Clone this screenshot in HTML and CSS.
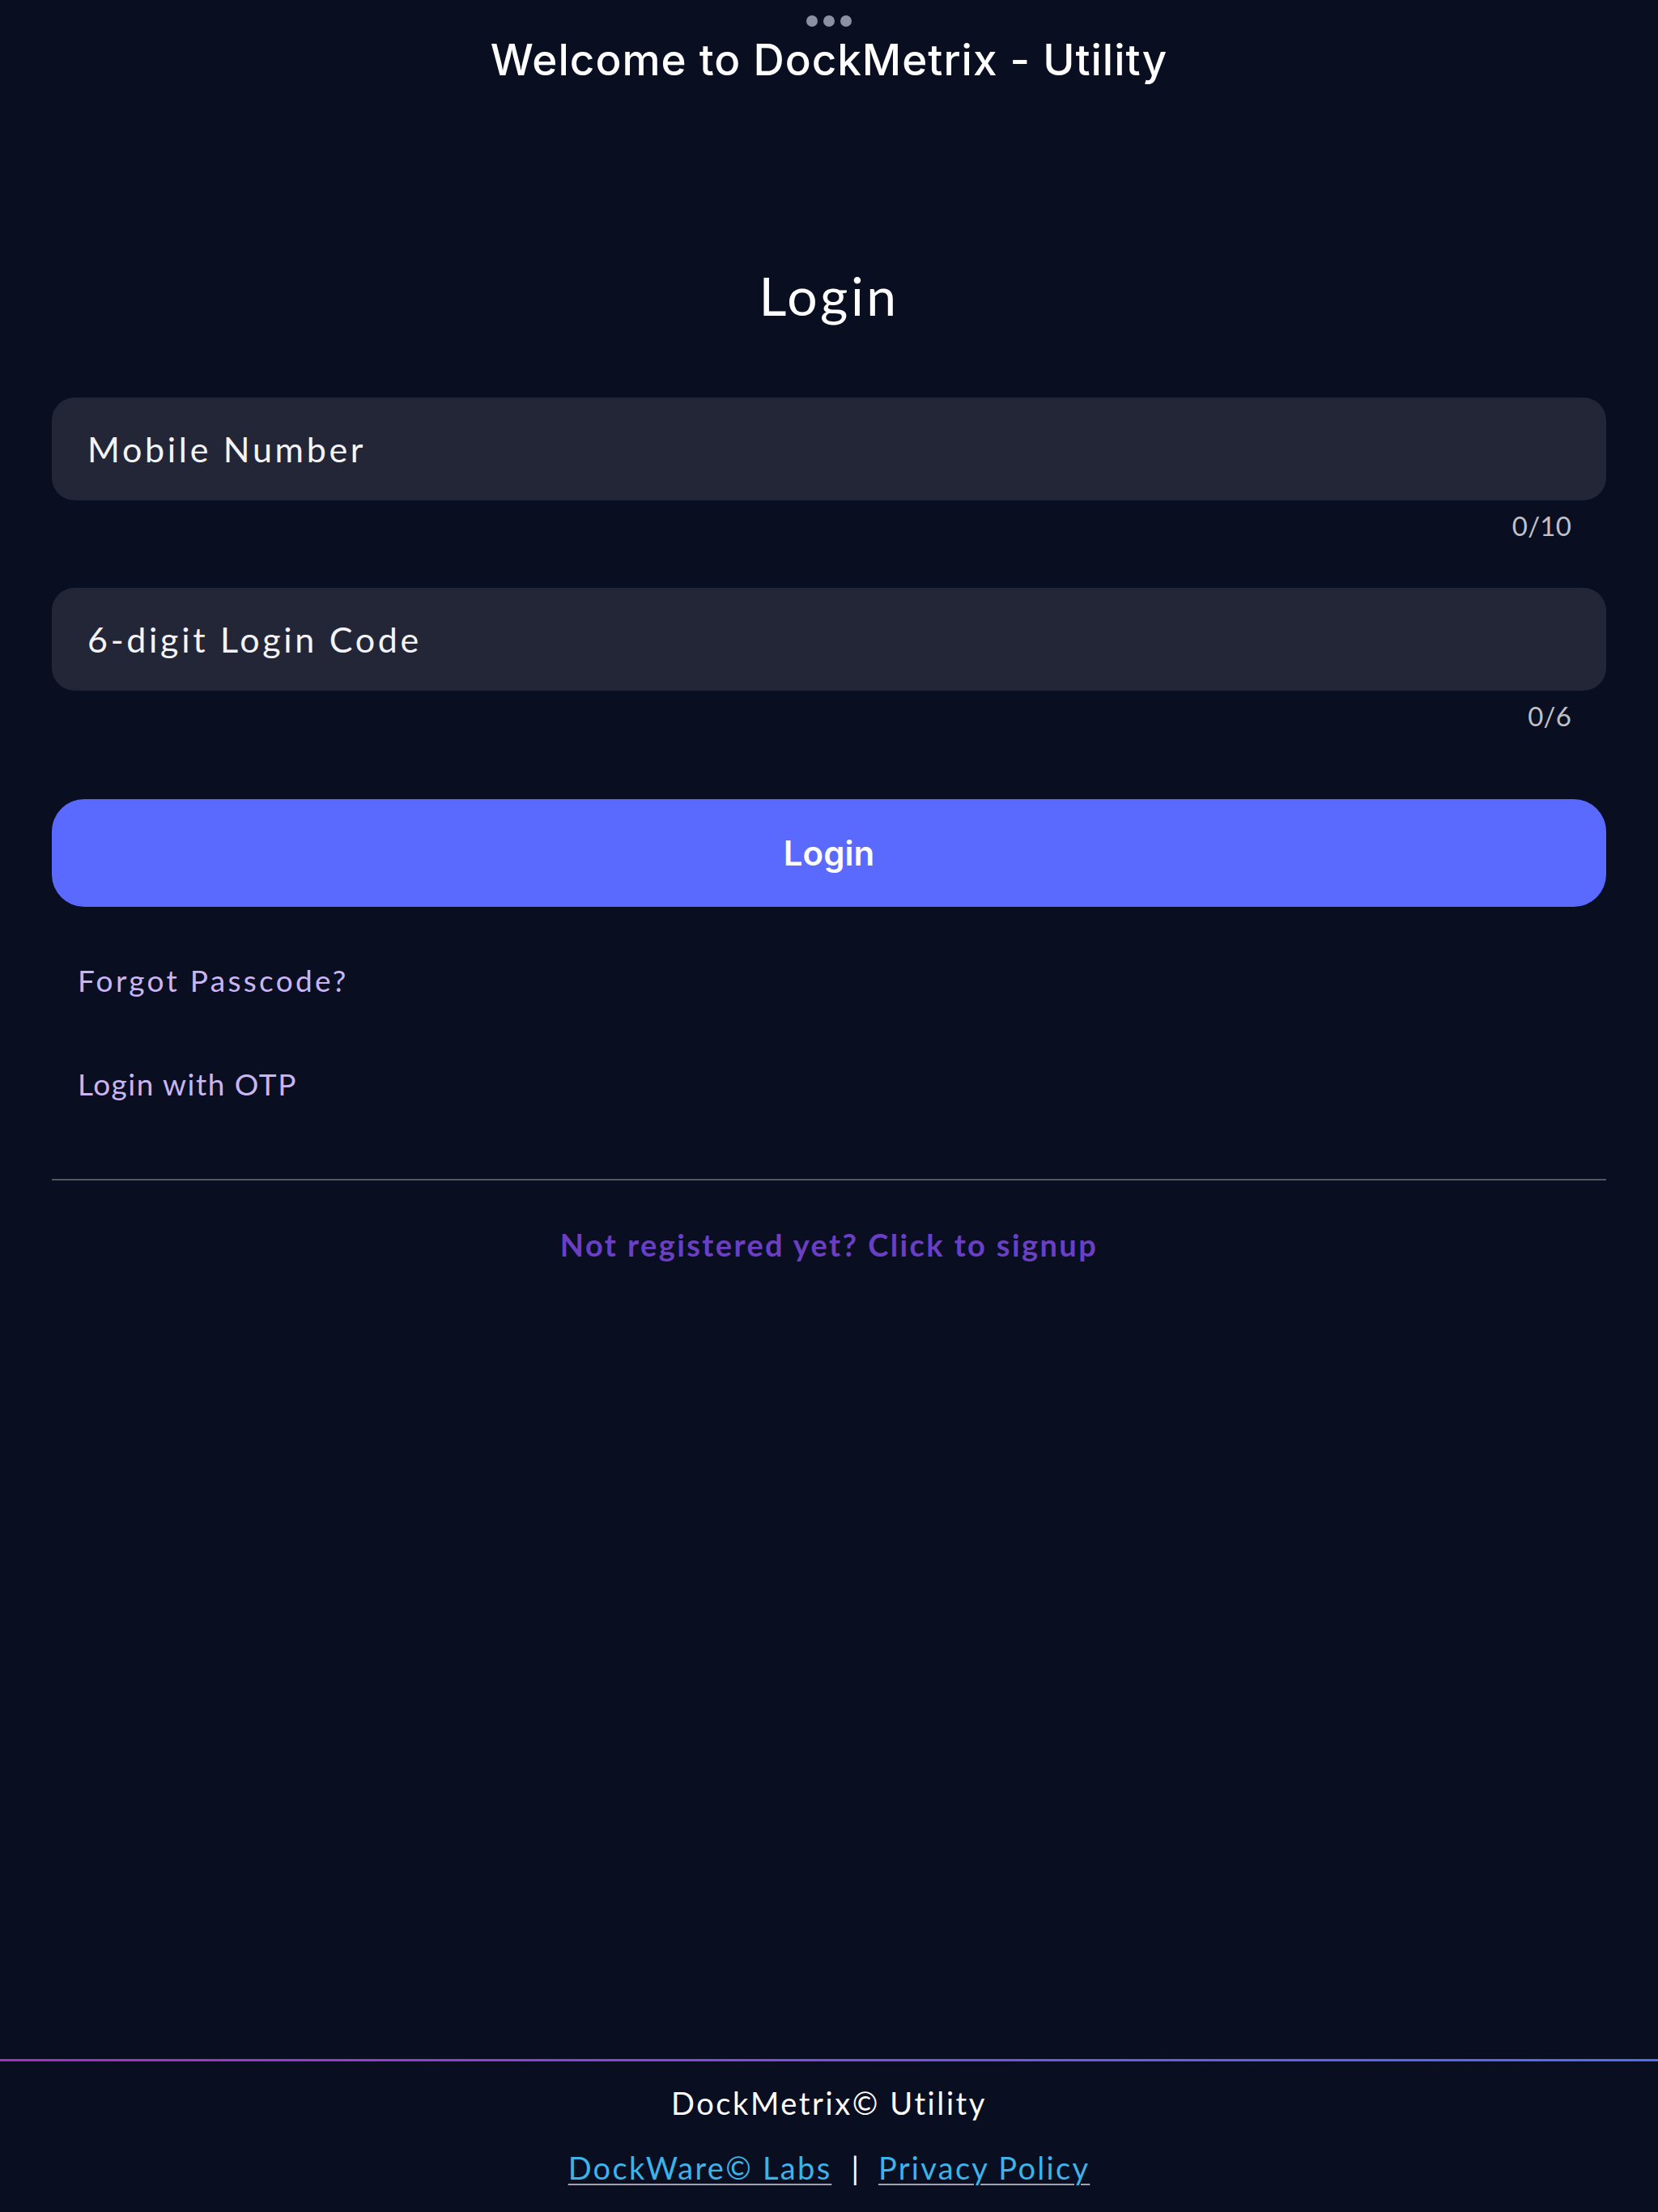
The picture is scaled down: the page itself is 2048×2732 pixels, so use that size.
FILE: index.html
```html
<!DOCTYPE html>
<html lang="en">
<head>
<meta charset="utf-8">
<title>DockMetrix - Utility</title>
<link rel="stylesheet" href="styles.css">
</head>
<body>
<div class="page">
  <header class="topbar">
    <div class="dots"><span class="dot"></span><span class="dot"></span><span class="dot"></span></div>
    <h1 class="app-title">Welcome to DockMetrix - Utility</h1>
  </header>
  <main class="main">
    <h2 class="heading">Login</h2>
    <div class="field">
      <div class="input">Mobile Number</div>
      <div class="counter">0/10</div>
    </div>
    <div class="field field-second">
      <div class="input">6-digit Login Code</div>
      <div class="counter">0/6</div>
    </div>
    <button class="btn-login">Login</button>
    <a class="text-link first">Forgot Passcode?</a>
    <a class="text-link second">Login with OTP</a>
    <hr class="divider">
    <p class="signup">Not registered yet? Click to signup</p>
  </main>
  <footer class="footer">
    <div class="footer-line"></div>
    <div class="footer-brand">DockMetrix© Utility</div>
    <div class="footer-links"><a class="flink">DockWare© Labs</a><span class="sep">|</span><a class="flink">Privacy Policy</a></div>
  </footer>
</div>
</body>
</html>
```
FILE: styles.css
```css
* { box-sizing: border-box; }
html, body { margin: 0; padding: 0; background: #0a0e21; }
body { font-family: "Lato", "Noto Sans", sans-serif; color: #f4f4f8; }

.page {
  min-height: 2732px;
  display: flex;
  flex-direction: column;
}

.topbar {
  padding-top: 19px;
  display: flex;
  flex-direction: column;
  align-items: center;
}
.dots { display: flex; gap: 7px; height: 14px; }
.dot { width: 14px; height: 14px; border-radius: 50%; background: #8b90a3; }
.app-title {
  margin: 11px 0 0;
  font-family: "Inter", "Roboto", sans-serif;
  font-weight: 500;
  font-size: 53px;
  line-height: 60px;
  color: #ffffff;
  letter-spacing: 1px;
}

.main {
  flex: 1;
  padding: 0 64px;
  display: flex;
  flex-direction: column;
}
.heading {
  margin: 221px 0 0;
  text-align: center;
  font-weight: 400;
  font-size: 66px;
  line-height: 80px;
  color: #ffffff;
  letter-spacing: 3.5px;
}

.field { margin-top: 86px; }
.field-second { margin-top: 57px; }
.input {
  height: 127px;
  border-radius: 28px;
  background: #232637;
  display: flex;
  align-items: center;
  padding-left: 44px;
  font-size: 43px;
  letter-spacing: 3.7px;
  color: #f4f4f8;
}
.counter {
  margin-top: 11px;
  text-align: right;
  padding-right: 43px;
  font-size: 33px;
  line-height: 40px;
  color: #bfc0c9;
  letter-spacing: 0.2px;
}

.btn-login {
  margin-top: 83px;
  height: 133px;
  border: none;
  border-radius: 40px;
  background: #5a6aff;
  color: #ffffff;
  font-family: "Inter", "Roboto", sans-serif;
  font-weight: 600;
  font-size: 42px;
  padding: 0;
}

.text-link {
  display: block;
  margin-left: 32px;
  font-size: 37px;
  line-height: 46px;
  color: #c8b5f2;
}
.text-link.first { margin-top: 68px; letter-spacing: 3.3px; }
.text-link.second { margin-top: 82px; letter-spacing: 1.5px; }

.divider {
  margin: 94px 0 0;
  border: none;
  height: 2px;
  background: #55555f;
}
.signup {
  margin: 56px 0 0;
  text-align: center;
  font-size: 38px;
  line-height: 46px;
  font-weight: 700;
  color: #6a3fc4;
  letter-spacing: 2.4px;
}

.footer { display: flex; flex-direction: column; align-items: center; }
.footer-line {
  align-self: stretch;
  height: 3px;
  background: linear-gradient(90deg, #a62fbf 0%, #7d4fe0 50%, #4f6df2 100%);
}
.footer-brand {
  margin-top: 27px;
  font-size: 38px;
  line-height: 48px;
  color: #ffffff;
  letter-spacing: 2.6px;
}
.footer-links {
  margin-top: 32px;
  margin-bottom: 31px;
  font-size: 38px;
  line-height: 48px;
  display: flex;
  align-items: baseline;
}
.flink {
  color: #3cb4ea;
  text-decoration: underline;
  text-decoration-color: #a0a2b0;
  text-decoration-thickness: 2px;
  text-underline-offset: 5px;
  letter-spacing: 2.3px;
}
.sep { color: #ffffff; margin: 0 24px; }
```
